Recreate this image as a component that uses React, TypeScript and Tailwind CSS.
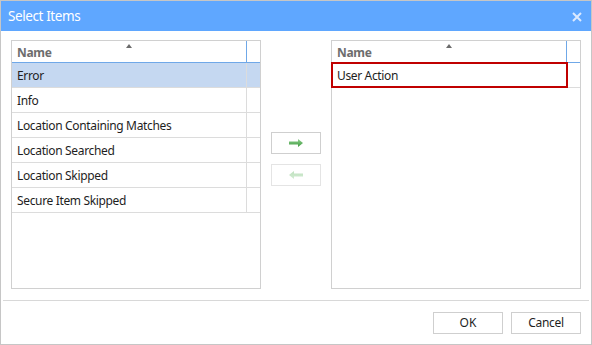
const font = { fontFamily: '"Noto Sans", "Open Sans", sans-serif' }

const leftItems = [
  'Error',
  'Info',
  'Location Containing Matches',
  'Location Searched',
  'Location Skipped',
  'Secure Item Skipped',
]

const SortArrow = () => (
  <svg width="6" height="4" viewBox="0 0 6 4" className="absolute left-1/2 top-[3px] -translate-x-1/2">
    <path d="M0 4 L3 0 L6 4 Z" fill="#6b6b6b" />
  </svg>
)

const ListPanel = ({ items, selected, focused }: { items: string[]; selected?: number; focused?: number }) => (
  <div className="w-[250px] h-[249px] border border-[#d0d0d0] bg-white flex flex-col">
    <div className="flex h-[22px] border-b border-[#6fa8e8] shrink-0">
      <div className="relative w-[235px] border-r border-[#6fa8e8] flex items-end pl-[5px] pb-[2px]">
        <SortArrow />
        <span className="text-[12px] font-bold text-[#6d6d6d] leading-[15px] tracking-[-0.3px]">Name</span>
      </div>
      <div className="flex-1" />
    </div>
    {items.map((item, i) => (
      <div
        key={item}
        className={`relative flex h-[25px] border-b border-[#dcdcdc] ${i === selected ? 'bg-[#c5d8f1]' : ''}`}
      >
        <div className="w-[235px] border-r border-[#dcdcdc] flex items-center pl-[5px] pt-[2px] text-[12px] text-[#1e1e1e] tracking-[-0.35px]">
          {item}
        </div>
        <div className="flex-1" />
        {i === focused && (
          <div className="absolute left-[-1px] top-[-1px] w-[237px] h-[26px] border-2 border-[#c00000]" />
        )}
      </div>
    ))}
  </div>
)

const ArrowButton = ({ dir, disabled }: { dir: 'right' | 'left'; disabled?: boolean }) => (
  <button
    className={`w-[50px] h-[22px] border bg-white flex items-center justify-center ${
      disabled ? 'border-[#e4e4e4]' : 'border-[#cfcfcf]'
    }`}
  >
    <svg width="14" height="8" viewBox="0 0 14 8" className={dir === 'left' ? 'rotate-180' : ''}>
      <defs>
        <linearGradient id={`g-${dir}`} x1="0" y1="0" x2="0" y2="1">
          <stop offset="0" stopColor={disabled ? '#d2ecd2' : '#8fd08f'} />
          <stop offset="1" stopColor={disabled ? '#bfe0bf' : '#3f9a3f'} />
        </linearGradient>
      </defs>
      <path d="M0 2.5 H9 V0 L14 4 L9 8 V5.5 H0 Z" fill={`url(#g-${dir})`} />
    </svg>
  </button>
)

export default function App() {
  return (
    <div
      className="w-[592px] h-[345px] border border-[#c6c6c6] bg-white flex flex-col"
      style={font}
    >
      <div className="h-[30px] bg-[#5fa7ff] flex items-center justify-between pl-[7px] pr-[9px] pt-[1px] shrink-0">
        <span className="text-[13.5px] text-white leading-none tracking-[-0.4px]">Select Items</span>
        <svg width="10" height="10" viewBox="0 0 10 10">
          <path d="M1 1 L9 9 M9 1 L1 9" stroke="#dbe9ff" strokeWidth="2" />
        </svg>
      </div>
      <div className="flex px-[10px] pt-[9px]">
        <ListPanel items={leftItems} selected={0} />
        <div className="w-[70px] flex flex-col items-center pt-[92px] gap-[10px]">
          <ArrowButton dir="right" />
          <ArrowButton dir="left" disabled />
        </div>
        <ListPanel items={['User Action']} focused={0} />
      </div>
      <div className="mx-[2px] mt-[11px] border-t border-[#d8d8d8]" />
      <div className="flex justify-end gap-[8px] px-[10px] pt-[11px]">
        <button className="w-[70px] h-[22px] border border-[#cfcfcf] bg-white text-[12px] text-[#1e1e1e]">OK</button>
        <button className="w-[70px] h-[22px] border border-[#cfcfcf] bg-white text-[12px] text-[#1e1e1e] tracking-[-0.3px]">Cancel</button>
      </div>
    </div>
  )
}
